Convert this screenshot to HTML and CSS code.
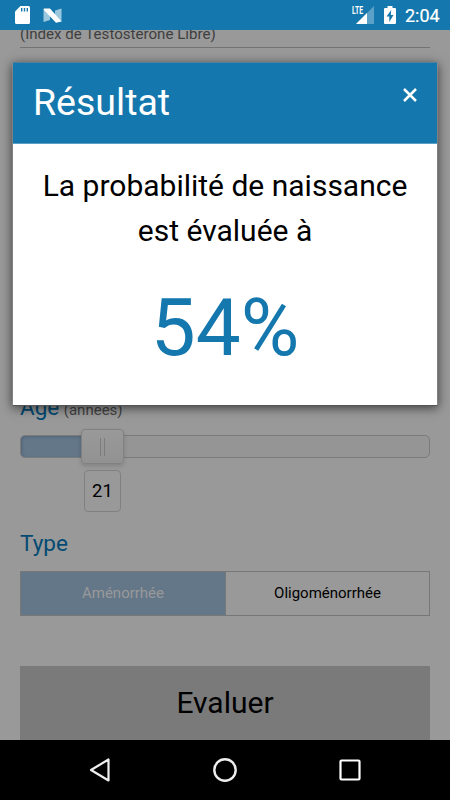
FILE: index.html
```html
<!DOCTYPE html>
<html lang="fr">
<head>
<meta charset="utf-8">
<title>Résultat</title>
<link rel="stylesheet" href="styles.css">
</head>
<body>
<div class="screen">
  <header class="status">
    <svg class="sd" width="15" height="18" viewBox="0 0 15 18"><path fill="#fff" d="M5.500 0H13.500Q15 0 15 1.500V16.500Q15 18 13.500 18H1.500Q0 18 0 16.500V5.500Z"/><path stroke="#1477ad" stroke-width="1.400" d="M6.700 2V5.500M9.500 2V5.500M12.300 2V5.500"/></svg>
    <svg class="n" width="19" height="15" viewBox="0 0 19 15"><path fill="#9cc8df" d="M0.500 1.500L7 3V12L0.500 14ZM12 2.500L18.500 0.500V13.500L12 12Z"/><path fill="#fff" d="M1 .5H7L18.500 13.500L13 14.800L0.500 1.500Z"/></svg>
    <span class="space"></span>
    <span class="lte">LTE</span>
    <svg class="signal" width="18" height="18" viewBox="0 0 18 18"><path fill="#5ba0c6" d="M18 0V18H0Z"/><path fill="#fff" d="M11 7V18H0Z"/></svg>
    <svg class="battery" width="12" height="18" viewBox="0 0 12 18"><path fill="#fff" d="M3.500 0H8.500V2H11Q12 2 12 3V17Q12 18 11 18H1Q0 18 0 17V3Q0 2 1 2H3.500Z"/><path fill="#1477ad" d="M7.200 4L2.500 10.500H5.300V16L9.500 9H6.800Z"/></svg>
    <span class="clock">2:04</span>
  </header>
  <main class="content">
    <div class="form">
      <div class="field-note">(Index de Testosterone Libre)</div>
      <div class="label age">Age <small>(années)</small></div>
      <div class="track"><div class="fill"></div><div class="thumb"><i></i></div></div>
      <div class="value">21</div>
      <div class="label type">Type</div>
      <div class="choices"><div class="choice on">Aménorrhée</div><div class="choice">Oligoménorrhée</div></div>
      <div class="submit">Evaluer</div>
    </div>
    <section class="dialog">
      <div class="dialog-head"><h1>Résultat</h1><svg class="close" width="14" height="14" viewBox="0 0 14 14"><path stroke="#fff" stroke-width="2.500" d="M1 1L13 13M13 1L1 13"/></svg></div>
      <div class="dialog-body"><p>La probabilité de naissance<br>est évaluée à</p><div class="percent">54%</div></div>
    </section>
  </main>
  <nav class="nav">
    <svg width="24" height="26" viewBox="0 0 24 26"><path fill="none" stroke="#eee" stroke-width="2.200" stroke-linejoin="round" d="M20.500 2.500V23.500L3 13Z"/></svg>
    <svg width="26" height="26" viewBox="0 0 26 26"><circle cx="13" cy="13" r="10.700" fill="none" stroke="#eee" stroke-width="2.400"/></svg>
    <svg width="24" height="24" viewBox="0 0 24 24"><rect x="2.500" y="2.500" width="19" height="19" rx="1" fill="none" stroke="#fff" stroke-width="2.200"/></svg>
  </nav>
</div>
</body>
</html>
```
FILE: styles.css
```css
* { box-sizing: border-box; }
body { margin: 0; font-family: Roboto, "Liberation Sans", sans-serif; }
svg { display: block; flex: none; }
.screen { width: 450px; height: 800px; display: flex; flex-direction: column; overflow: hidden; }
.status { height: 30px; flex: none; background: #1477ad; color: #fff; display: flex; align-items: flex-start; padding: 6px 10px 0 15px; }
.n { margin: 2px 0 0 13px; }
.space { flex: 1; }
.lte { font-size: 10px; line-height: 10px; font-weight: 700; width: 12px; transform: scaleX(.68); transform-origin: left top; margin-right: -8px; white-space: nowrap; }
.battery { margin-left: 10px; }
.clock { font-size: 18px; line-height: 20px; width: 35px; margin-left: 9px; -webkit-text-stroke: .2px #fff; }
.content { position: relative; flex: 1; min-height: 0; overflow: hidden; background: #999; }
.form { padding: 0 20px; display: flex; flex-direction: column; }
.field-note { height: 18px; border-bottom: 1px solid #737373; color: #3f3f3f; font-size: 15.1px; line-height: 18px; display: flex; align-items: flex-end; padding-bottom: 4px; }
.label { color: #034a73; font-size: 22.5px; height: 26px; line-height: 26px; }
.age { margin-top: 346px; }
.age small { font-size: 15px; color: #444; margin-left: -1px; }
.track { height: 23px; margin-top: 15px; border: 1px solid #7b7b7b; border-radius: 5px; background: #959595; display: flex; align-items: center; }
.fill { width: 60px; height: 21px; border-radius: 4px 0 0 4px; background: #647789; box-shadow: inset 1px 1px 3px #506477; }
.thumb { width: 43px; height: 35px; border: 1px solid #818181; border-radius: 4px; background: linear-gradient(#999, #929292); box-shadow: 0 2px 4px rgba(0,0,0,.15); flex: none; display: flex; align-items: center; justify-content: center; }
.thumb i { width: 5px; height: 18px; border: solid #7c7c7c; border-width: 0 1px; }
.value { width: 37px; height: 42px; margin: 12px 0 0 64px; border: 1px solid #808080; border-radius: 4px; text-align: center; font-size: 18.5px; line-height: 40px; }
.type { margin-top: 18px; }
.choices { display: grid; grid-template-columns: 1fr 1fr; margin-top: 15px; height: 45px; border: 1px solid #777; }
.choice { font-size: 15px; line-height: 43px; text-align: center; }
.choice + .choice { border-left: 1px solid #777; }
.on { background: #647789; color: #999; }
.submit { height: 75px; margin-top: 50px; background: #7a7a7a; color: #000; text-align: center; font-size: 30px; line-height: 74px; }
.dialog { position: absolute; left: 12px; top: 32px; width: 426px; height: 344px; background: #fff; box-shadow: 0 2px 10px rgba(0,0,0,.6); border: 1px solid rgba(150,155,160,.5); border-top-color: #557f9b; border-bottom-color: #555; background-clip: padding-box; }
.dialog-head { height: 81px; background: #1477ad; color: #fff; display: flex; align-items: flex-start; justify-content: space-between; padding: 0 20px; border-bottom: 1px solid #5b9fc5; }
.dialog-head h1 { margin: 0; font-weight: 400; font-size: 37.5px; line-height: 78px; }
.close { margin-top: 25px; }
.dialog-body { text-align: center; color: #000; }
.dialog-body p { margin: 19px 0 0; font-size: 30px; line-height: 45px; }
.percent { color: #1477ad; font-size: 80px; line-height: 94px; margin-top: 28px; }
.nav { height: 60px; flex: none; background: #000; display: flex; justify-content: center; align-items: center; gap: 100px; }
```
